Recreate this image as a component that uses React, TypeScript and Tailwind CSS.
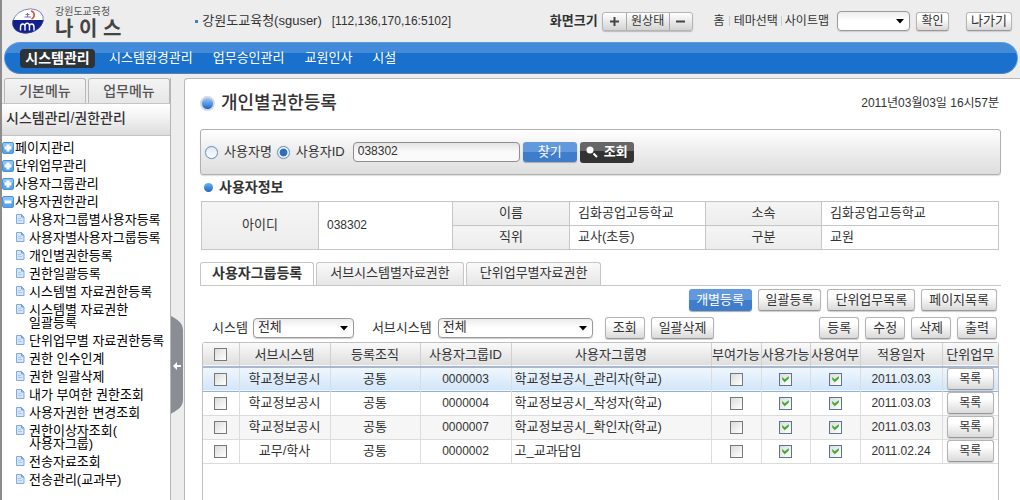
import { useState, type ReactNode } from "react";

const navItems = ["시스템환경관리", "업무승인관리", "교원인사", "시설"];

const folders = [
  { label: "페이지관리", open: false },
  { label: "단위업무관리", open: false },
  { label: "사용자그룹관리", open: false },
  { label: "사용자권한관리", open: true },
];

const pages = [
  ["사용자그룹별사용자등록"],
  ["사용자별사용자그룹등록"],
  ["개인별권한등록"],
  ["권한일괄등록"],
  ["시스템별 자료권한등록"],
  ["시스템별 자료권한", "일괄등록"],
  ["단위업무별 자료권한등록"],
  ["권한 인수인계"],
  ["권한 일괄삭제"],
  ["내가 부여한 권한조회"],
  ["사용자권한 변경조회"],
  ["권한이상자조회(", "사용자그룹)"],
  ["전송자료조회"],
  ["전송관리(교과부)"],
];

const tabs = ["사용자그룹등록", "서브시스템별자료권한", "단위업무별자료권한"];

const columns = [
  { label: "서브시스템", width: "w-[91px]" },
  { label: "등록조직", width: "w-[90px]" },
  { label: "사용자그룹ID", width: "w-[91px]" },
  { label: "사용자그룹명", width: "" },
  { label: "부여가능", width: "w-[50px]" },
  { label: "사용가능", width: "w-[49px]" },
  { label: "사용여부", width: "w-[50px]" },
  { label: "적용일자", width: "w-[82px]" },
  { label: "단위업무", width: "w-[56px]" },
];

const rows = [
  { system: "학교정보공시", org: "공통", id: "0000003", name: "학교정보공시_관리자(학교)", date: "2011.03.03" },
  { system: "학교정보공시", org: "공통", id: "0000004", name: "학교정보공시_작성자(학교)", date: "2011.03.03" },
  { system: "학교정보공시", org: "공통", id: "0000007", name: "학교정보공시_확인자(학교)", date: "2011.03.03" },
  { system: "교무/학사", org: "공통", id: "0000002", name: "고_교과담임", date: "2011.02.24" },
];

function Button({ children, className = "h-[22px] px-[7px]" }: { children: ReactNode; className?: string }) {
  return (
    <button
      type="button"
      className={`flex items-center justify-center rounded-[3px] border border-[#b4b4b4] border-b-[#999] bg-linear-to-b from-white from-30% to-[#d9d9d9] pb-px whitespace-nowrap shadow-[0_1px_1px_#ccc] ${className}`}
    >
      {children}
    </button>
  );
}

function BlueButton({ children, className }: { children: ReactNode; className: string }) {
  return (
    <button
      type="button"
      className={`flex items-center justify-center rounded-[3px] bg-linear-to-b from-[#6298dc] from-50% to-[#3f7cc9] to-50% pb-px whitespace-nowrap text-white shadow-[0_1px_1px_#aaa] ${className}`}
    >
      {children}
    </button>
  );
}

function Select({ id, label, options, className }: { id: string; label: string; options: string[]; className: string }) {
  return (
    <span className={`relative flex ${className}`}>
      <select
        id={id}
        aria-label={label}
        className="h-5 w-full appearance-none rounded border border-[#999] bg-linear-to-b from-[#ececec] to-white to-50% pr-5 pb-0.5 pl-1 leading-[16px] shadow-[0_1px_1px_#ccc]"
      >
        {options.map((o) => (
          <option key={o}>{o}</option>
        ))}
      </select>
      <svg className="pointer-events-none absolute top-2 right-1.5" width="8" height="5" viewBox="0 0 8 5">
        <path d="M0 0h8L4 4.500z" fill="#000" />
      </svg>
    </span>
  );
}

function Check({ label, checked = false }: { label: string; checked?: boolean }) {
  return (
    <span className="relative mx-auto block size-[13px]">
      <input
        type="checkbox"
        aria-label={label}
        defaultChecked={checked}
        className="peer block size-[13px] appearance-none border border-[#75797f] bg-linear-to-br from-[#dcdcd8] to-white checked:border-[#5d7391]"
      />
      <svg
        className="pointer-events-none absolute top-[3px] left-[3px] hidden peer-checked:block"
        width="7"
        height="7"
        viewBox="0 0 7 7"
      >
        <path d="M0.500 1.500v2L2.800 6 6.500 2.600v-2L2.800 3.600z" fill="#3cab35" stroke="#3cab35" strokeWidth="0.500" />
      </svg>
    </span>
  );
}

function Radio({ label, checked = false }: { label: string; checked?: boolean }) {
  return (
    <label className="flex items-center gap-1.5">
      <input
        type="radio"
        name="searchType"
        defaultChecked={checked}
        className="size-[13px] appearance-none rounded-full border border-[#6f93ba] bg-linear-to-b from-[#dce8f4] to-white shadow-[0_0_1px_#9ab] checked:bg-radial checked:from-[#2f6fb8] checked:from-45% checked:to-[#e6f1fb] checked:to-55%"
      />
      {label}
    </label>
  );
}

function FolderIcon({ open }: { open: boolean }) {
  return (
    <svg width="12" height="12" viewBox="0 0 12 12">
      <rect x="0.500" y="0.500" width="11" height="11" rx="1.500" fill="#58a3ea" stroke="#4a93d8" />
      <rect x="1" y="1" width="10" height="4" rx="1" fill="#8cc4f5" />
      <path d={open ? "M2.500 4.500h7v3h-7z" : "M4.500 2.500h3v2h2v3h-2v2h-3v-2h-2v-3h2z"} fill="#fff" />
    </svg>
  );
}

function PageIcon() {
  return (
    <svg className="mt-px shrink-0" width="9" height="10" viewBox="0 0 9 10">
      <path d="M0.500 0.500h5l2.500 2.500v6.500h-7.500z" fill="#d3e6fb" stroke="#86a8dc" />
      <path d="M5.500 0.500v2.500h2.500" fill="none" stroke="#7196cf" />
      <path d="M2 4.500h3M2 6.500h4" stroke="#a9c9f0" />
    </svg>
  );
}

function Logo() {
  return (
    <svg width="34" height="28" viewBox="0 0 34 28">
      <clipPath id="logo-shape">
        <ellipse cx="17" cy="14" rx="16" ry="12" transform="rotate(-18 17 14)" />
      </clipPath>
      <g clipPath="url(#logo-shape)">
        <rect width="34" height="28" fill="#fff" />
        <rect y="13" width="34" height="15" fill="#14208a" />
      </g>
      <ellipse
        cx="17"
        cy="14"
        rx="15.700"
        ry="11.700"
        transform="rotate(-18 17 14)"
        fill="none"
        stroke="#3a459c"
        strokeWidth="0.600"
      />
      <path d="M20 4c4 1 4.500 6 0.500 8" fill="none" stroke="#e0523c" strokeWidth="1.600" />
      <path d="M13.500 10h6.500M14.500 7.500h4M16.500 6v4" stroke="#7c6fb0" strokeWidth="1" />
      <path
        d="M9.500 23.500v-3.500c0-4 4.500-4 4.500-0.500v4M14 19.500c0-4.500 4.500-4.500 4.500 0v4M18.500 19.500c0-3.500 4.500-3.500 4.500 0.500v3.500"
        fill="none"
        stroke="#fff"
        strokeWidth="1.400"
      />
    </svg>
  );
}

function Header() {
  return (
    <header className="flex h-[42px] items-center pr-2 pl-[9px] text-[#333]">
      <div className="flex items-center gap-2.5">
        <Logo />
        <div className="flex flex-col pt-0.5">
          <span className="text-[10px] leading-[14px] text-[#555]">강원도교육청</span>
          <span className="text-[20px] leading-[20px] font-bold text-[#444]">나 이 스</span>
        </div>
      </div>
      <div className="ml-[74px] flex items-center gap-1">
        <span className="size-[3px] bg-[#3d7fc4]" />
        <span>강원도교육청(sguser)</span>
        <span className="ml-1.5 text-[12px]">[112,136,170,16:5102]</span>
      </div>
      <div className="ml-auto flex items-center">
        <strong className="mr-1">화면크기</strong>
        <div className="flex h-[19px] items-stretch divide-x divide-[#aaa] rounded-[3px] border border-[#b4b4b4] bg-linear-to-b from-white to-[#d4d4d4] shadow-[0_1px_1px_#bbb]">
          <button type="button" aria-label="확대" className="flex w-6 items-center justify-center">
            <svg width="9" height="9" viewBox="0 0 9 9">
              <path d="M4.500 0v9M0 4.500h9" stroke="#444" strokeWidth="2" />
            </svg>
          </button>
          <button type="button" className="w-[43px] text-[12px] leading-[16px]">원상태</button>
          <button type="button" aria-label="축소" className="flex w-[22px] items-center justify-center">
            <svg width="9" height="9" viewBox="0 0 9 9">
              <path d="M0 4.500h9" stroke="#444" strokeWidth="2" />
            </svg>
          </button>
        </div>
        <nav className="ml-[21px] flex items-center text-[12px]">
          <a href="#">홈</a>
          <span className="mx-1 h-2.5 w-px bg-[#ccc]" />
          <a href="#">테마선택</a>
          <span className="mx-[3px] h-2.5 w-px bg-[#ccc]" />
          <a href="#">사이트맵</a>
        </nav>
        <Select id="theme" label="테마" options={[""]} className="ml-2 w-[73px]" />
        <Button className="ml-1.5 h-[19px] w-[33px] text-[12px]">확인</Button>
        <Button className="ml-[17px] h-[19px] w-[46px]">나가기</Button>
      </div>
    </header>
  );
}

function Sidebar() {
  return (
    <aside className="flex w-[169px] shrink-0 flex-col border-r border-[#b5b5b5] bg-white">
      <div className="flex gap-0.5 bg-[#ededed] pl-0.5 text-[14px] text-[#555]">
        {["기본메뉴", "업무메뉴"].map((t) => (
          <button
            key={t}
            type="button"
            className="h-[25px] flex-1 rounded-t-[3px] border border-b-0 border-[#b8b8b8] bg-linear-to-b from-[#f4f4f4] to-[#e6e6e6] pb-px font-medium"
          >
            {t}
          </button>
        ))}
      </div>
      <h2 className="flex h-[33px] items-center border-y border-[#c4c4c4] bg-linear-to-b from-white via-[#f4f4f4] via-40% to-[#dcdcdc] pb-1 pl-1 text-[14px] font-medium text-[#333]">
        시스템관리/권한관리
      </h2>
      <ul className="mt-[3px] whitespace-nowrap text-black">
        {folders.map((f) => (
          <li key={f.label}>
            <button type="button" className="flex h-[18px] items-center gap-px">
              <FolderIcon open={f.open} />
              {f.label}
            </button>
          </li>
        ))}
        {pages.map((lines) => (
          <li key={lines[0]}>
            <a href="#" className="flex items-start gap-1 pt-0.5 pb-[3px] pl-3.5 leading-[13px]">
              <PageIcon />
              <span>
                {lines.map((l) => (
                  <span key={l} className="block">{l}</span>
                ))}
              </span>
            </a>
          </li>
        ))}
      </ul>
    </aside>
  );
}

function SearchPanel() {
  return (
    <form
      className="flex h-[46px] items-center rounded-[3px] border border-[#b0b0b0] bg-linear-to-b from-white via-[#f0f0f0] via-40% to-[#dedede] pl-1 shadow-[0_1px_1px_#ddd]"
      onSubmit={(e) => e.preventDefault()}
    >
      <div className="flex gap-[5px]">
        <Radio label="사용자명" />
        <Radio label="사용자ID" checked />
      </div>
      <input
        type="text"
        aria-label="검색어"
        defaultValue="038302"
        className="ml-2 h-5 w-[167px] rounded border border-[#8e8e8e] bg-linear-to-b from-[#e4e4e4] to-[#fafafa] to-50% px-1 pb-0.5 text-[12px]"
      />
      <BlueButton className="ml-[3px] h-5 w-[54px]">찾기</BlueButton>
      <button
        type="submit"
        className="ml-[3px] flex h-[21px] w-[54px] items-center justify-center gap-1.5 rounded-[3px] bg-linear-to-b from-[#666] from-45% to-[#333] to-45% font-bold text-white"
      >
        <svg width="12" height="12" viewBox="0 0 12 12">
          <circle cx="4" cy="4" r="3.500" fill="#fff" />
          <path d="M7.500 7.500l3.500 3.500" stroke="#fff" strokeWidth="2" />
        </svg>
        조회
      </button>
    </form>
  );
}

const infoHead = "border border-[#c6c6c6] bg-linear-to-b from-[#f5f5f5] to-[#ececec] pb-px text-center font-normal";
const infoCell = "border border-[#c6c6c6] pb-px pl-2";

function UserInfo() {
  return (
    <div className="mr-0.5 ml-px">
      <table className="w-full table-fixed border-collapse">
        <colgroup>
          <col className="w-[117px]" />
          <col className="w-[134px]" />
          <col className="w-[117px]" />
          <col className="w-[136px]" />
          <col className="w-[116px]" />
          <col />
        </colgroup>
        <tbody>
          <tr className="h-6">
            <th rowSpan={2} className={infoHead}>아이디</th>
            <td rowSpan={2} className={`${infoCell} text-[12px]`}>038302</td>
            <th className={infoHead}>이름</th>
            <td className={infoCell}>김화공업고등학교</td>
            <th className={infoHead}>소속</th>
            <td className={infoCell}>김화공업고등학교</td>
          </tr>
          <tr className="h-6">
            <th className={infoHead}>직위</th>
            <td className={infoCell}>교사(초등)</td>
            <th className={infoHead}>구분</th>
            <td className={infoCell}>교원</td>
          </tr>
        </tbody>
      </table>
    </div>
  );
}

function GroupTable() {
  const [selected, setSelected] = useState(0);

  return (
    <div className="mx-0.5 mt-[3px] flex-1 rounded-t-[3px] border border-b-0 border-[#c0c0c0]">
      <table className="w-full table-fixed border-collapse">
        <thead>
          <tr className="h-6 border-b-2 border-[#aab6cb] bg-linear-to-b from-[#fafafa] to-[#dedede]">
            <th className="w-9 border-r border-[#d0d0d0]">
              <Check label="전체선택" />
            </th>
            {columns.map((c) => (
              <th
                key={c.label}
                className={`border-r border-[#d0d0d0] font-normal whitespace-nowrap last:border-r-0 ${c.width}`}
              >
                {c.label}
              </th>
            ))}
          </tr>
        </thead>
        <tbody>
          {rows.map((r, i) => (
            <tr
              key={r.id}
              onClick={() => setSelected(i)}
              className={`h-6 border-b text-center *:border-r *:border-[#dcdcdc] *:last:border-r-0 ${
                i === selected
                  ? "border-[#8fb4dc] bg-linear-to-b from-[#f0f7fd] to-[#d3e6f9]"
                  : i % 2 === 0
                    ? "border-[#dcdcdc] bg-[#f6f6f6]"
                    : "border-[#dcdcdc] bg-white"
              }`}
            >
              <td><Check label={`${r.id} 선택`} /></td>
              <td>{r.system}</td>
              <td>{r.org}</td>
              <td className="text-[12px]">{r.id}</td>
              <td className="pl-[3px] text-left">{r.name}</td>
              <td><Check label="부여가능" /></td>
              <td><Check label="사용가능" checked /></td>
              <td><Check label="사용여부" checked /></td>
              <td className="text-[12px]">{r.date}</td>
              <td><Button className="mx-auto h-[22px] w-[47px] text-[12px]">목록</Button></td>
            </tr>
          ))}
        </tbody>
      </table>
    </div>
  );
}

export default function App() {
  return (
    <div className="flex min-h-screen flex-col border-l-2 border-[#8c8c8c] bg-[#ededed] font-['Liberation_Sans','Noto_Sans_CJK_KR',sans-serif] text-[13px] leading-[18px] text-[#333]">
      <Header />
      <nav className="mr-0.5 ml-0.5 flex h-8 items-center rounded-full border border-[#5d9bd8] border-b-[#5a7fa8] bg-linear-to-b from-[#438bd9] from-33% to-[#1a70cd] to-33% pl-[15px] text-white">
        <a
          href="#"
          className="flex h-[19px] w-[75px] items-center justify-center rounded bg-[#2e3338] text-[14px] font-bold"
        >
          시스템관리
        </a>
        <div className="ml-3.5 flex gap-5">
          {navItems.map((n) => (
            <a key={n} href="#">{n}</a>
          ))}
        </div>
      </nav>
      <div className="mt-1 flex flex-1">
        <Sidebar />
        <div className="w-[13px] shrink-0">
          <button type="button" aria-label="메뉴 닫기" className="mt-[238px] block">
            <svg width="12" height="98" viewBox="0 0 12 98">
              <path d="M0 0c3 2 12 5 12 14v70c0 8-8 11-12 14z" fill="#8a8d94" />
              <path d="M2 50l4-4v3h4v2h-4v3z" fill="#fff" />
            </svg>
          </button>
        </div>
        <main className="flex min-w-0 flex-1 flex-col rounded-tl border-t border-l border-[#b8b8b8] bg-white pr-[19px] pl-[15px]">
          <div className="flex h-[50px] items-center justify-between pr-0.5 pb-0.5">
            <h1 className="flex items-center gap-1.5 text-[18px] font-medium">
              <span className="size-[15px] rounded-full border-2 border-[#d5d9de] bg-linear-to-b from-[#9cc9f3] to-[#0f62cc]" />
              개인별권한등록
            </h1>
            <time className="text-[12px]">2011년03월03일 16시57분</time>
          </div>
          <SearchPanel />
          <h2 className="flex h-[26px] items-center gap-1.5 pb-0.5 pl-1 text-[14px] font-bold">
            <span className="size-[9px] rounded-full bg-linear-to-b from-[#6db0f0] to-[#1767c6]" />
            사용자정보
          </h2>
          <UserInfo />
          <div className="mt-3 flex gap-0.5 border-b border-[#c6c6c6]">
            {tabs.map((t, i) => (
              <button
                key={t}
                type="button"
                className={`h-[23px] rounded-t-[3px] border border-b-0 border-[#c6c6c6] pb-0.5 whitespace-nowrap ${
                  i === 0
                    ? "-mb-px bg-white px-[11px] text-[14px] font-bold"
                    : "bg-linear-to-b from-[#fafafa] to-[#e6e6e6] px-[13px]"
                }`}
              >
                {t}
              </button>
            ))}
          </div>
          <div className="mt-[3px] flex justify-end gap-1.5 pr-1">
            <BlueButton className="h-[22px] w-[63px]">개별등록</BlueButton>
            <Button>일괄등록</Button>
            <Button>단위업무목록</Button>
            <Button>페이지목록</Button>
          </div>
          <div className="mt-1.5 flex items-center pr-1 pl-3">
            <label htmlFor="system">시스템</label>
            <Select id="system" label="시스템" options={["전체"]} className="ml-[5px] w-[101px]" />
            <label htmlFor="subsystem" className="ml-[18px]">서브시스템</label>
            <Select id="subsystem" label="서브시스템" options={["전체"]} className="ml-1.5 w-[155px]" />
            <div className="ml-3 flex gap-1.5">
              <Button>조회</Button>
              <Button>일괄삭제</Button>
            </div>
            <div className="ml-auto flex gap-1.5">
              <Button>등록</Button>
              <Button>수정</Button>
              <Button>삭제</Button>
              <Button>출력</Button>
            </div>
          </div>
          <GroupTable />
        </main>
      </div>
    </div>
  );
}
